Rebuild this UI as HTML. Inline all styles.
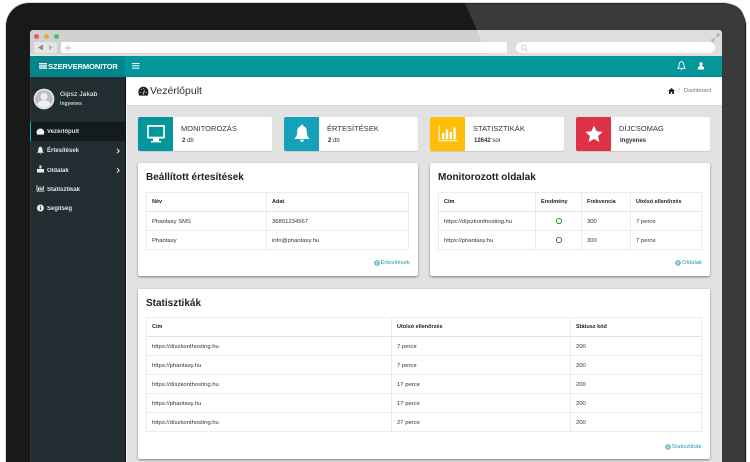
<!DOCTYPE html>
<html><head><meta charset="utf-8">
<style>
html,body{margin:0;padding:0;width:750px;height:462px;overflow:hidden;background:#fff}
*{box-sizing:border-box}
body{font-family:"Liberation Sans",sans-serif;position:relative;color:#333}
.a{position:absolute}
.t{position:absolute;white-space:nowrap;line-height:1}
.card{position:absolute;top:117px;height:34px;width:134px;background:#fff;border-radius:2px;box-shadow:0 1px 1px rgba(0,0,0,.12)}
.ic{position:absolute;left:0;top:0;width:35px;height:34px;border-radius:2px 0 0 2px}
.ct{position:absolute;left:43px;top:8px;font-size:7.4px;color:#333;white-space:nowrap;line-height:1;letter-spacing:.1px}
.cn{position:absolute;left:44px;top:20.5px;font-size:6px;color:#333;white-space:nowrap;line-height:1}
.panel{position:absolute;background:#fff;border-radius:2px;box-shadow:0 1px 2px rgba(0,0,0,.45)}
h3{position:absolute;margin:0;font-size:10px;font-weight:bold;color:#222;line-height:1;white-space:nowrap;left:8px;top:10px}
table{position:absolute;border-collapse:collapse;table-layout:fixed;font-size:5.9px;color:#333}
td,th{border:1px solid #ececec;padding:0 0 0 5px;text-align:left;height:19px;white-space:nowrap;overflow:hidden}
td{padding-top:1px}
th{color:#222;font-weight:bold;font-size:5.5px;border-bottom:1.5px solid #e2e2e2}
.l{position:absolute;font-size:5.9px;color:#2a9bad;white-space:nowrap;line-height:1}
.m{position:absolute;left:47px;font-size:6px;color:#eef;white-space:nowrap;line-height:1;font-weight:bold;opacity:.92}
.dot{display:inline-block;width:5.5px;height:5.5px;border:1.6px solid #2a9a2a;border-radius:50%;margin-left:15px;vertical-align:middle}
</style></head>
<body>
<!-- bezel -->
<div class="a" style="left:5px;top:2px;width:742px;height:480px;border-radius:24px 24px 0 0;background:#191919;border:1.5px solid #d8d8d8;border-bottom:0"></div>
<svg class="a" style="left:0;top:0" width="750" height="462"><path d="M465 3.5H724Q745 3.5 745 25V462H722V30H477Z" fill="#3a3a3a"/></svg>
<!-- screen -->
<div class="a" style="left:30px;top:30px;width:692px;height:432px;background:#e2e2e2;border-radius:3px 3px 0 0;overflow:hidden">
  <div class="a" style="left:0;top:0;width:692px;height:26px;background:#d1d1d1"></div>
  <svg class="a" style="left:0;top:0" width="692" height="26"><path d="M447 0H692V26H457Z" fill="#dedede"/></svg>
  <div class="a" style="left:0;top:24px;width:692px;height:2px;background:#e8dede"></div>
</div>
<div class="a" style="left:33.5px;top:33.5px;width:5.4px;height:5.4px;border-radius:50%;background:#ee5a5f"></div>
<div class="a" style="left:43.5px;top:33.5px;width:5.4px;height:5.4px;border-radius:50%;background:#e5b02e"></div>
<div class="a" style="left:53.5px;top:33.5px;width:5.4px;height:5.4px;border-radius:50%;background:#3ec76a"></div>
<div class="a" style="left:34px;top:42px;width:23px;height:11px;background:#e6e6e6;border-radius:2px"></div>
<svg class="a" style="left:37px;top:44px" width="18" height="7"><path d="M1 3.5L6 .5V6.5Z" fill="#8a8a8a"/><path d="M12 .8L16 3.5L12 6.2Z" fill="#b5b5b5"/></svg>
<div class="a" style="left:61px;top:42px;width:446px;height:11px;background:#fff;border-radius:2px"></div>
<svg class="a" style="left:64px;top:44px" width="8" height="8"><path d="M4 1V7M1 4H7" stroke="#bbb" stroke-width="1"/></svg>
<div class="a" style="left:516px;top:42px;width:199px;height:11px;background:#fff;border-radius:6px"></div>
<svg class="a" style="left:520px;top:44px" width="9" height="8"><circle cx="3.6" cy="3.4" r="2.3" fill="none" stroke="#c4c4c4" stroke-width=".8"/><path d="M5.4 5.2L7.5 7.3" stroke="#c4c4c4"/></svg>
<svg class="a" style="left:711px;top:33px" width="9" height="9"><path d="M1 8L4 5M5 4L8 1M5.5 1H8V3.5M1 5.5V8H3.5" stroke="#a9a9a9" fill="none"/></svg>
<!-- top nav -->
<div class="a" style="left:30px;top:56px;width:692px;height:21px;background:#05969c;border-bottom:1px solid #04838a"></div>
<div class="a" style="left:30px;top:56px;width:95px;height:21px;background:#03858c"></div>
<svg class="a" style="left:39px;top:63px" width="8" height="6"><path d="M0 0H8V1.4H0ZM0 2.2H8V3.6H0ZM0 4.4H8V5.8H0Z" fill="#fff"/></svg>
<div class="t" style="left:48px;top:62.5px;font-size:7.6px;font-weight:bold;color:#fff;letter-spacing:-.12px">SZERVERMONITOR</div>
<svg class="a" style="left:132px;top:63px" width="8" height="6"><path d="M0 0H7.5V1H0ZM0 2.3H7.5V3.3H0ZM0 4.6H7.5V5.6H0Z" fill="#fff"/></svg>
<svg class="a" style="left:677px;top:61px" width="9" height="10"><path d="M4.5 .6C2.6 .9 2.2 2.3 2.2 4C2.2 5.5 1.6 6.4 .8 7.3H8.2C7.4 6.4 6.8 5.5 6.8 4C6.8 2.3 6.4 .9 4.5 .6Z" fill="none" stroke="#fff" stroke-width=".9"/><path d="M3.5 8.2H5.5L4.5 9.4Z" fill="#fff"/></svg>
<svg class="a" style="left:697px;top:62px" width="8" height="8"><circle cx="4" cy="2" r="1.7" fill="#fff"/><path d="M.8 7.5C.8 5 2 3.8 4 3.8S7.2 5 7.2 7.5Z" fill="#fff"/></svg>
<!-- sidebar -->
<div class="a" style="left:30px;top:77px;width:95px;height:385px;background:#222d32;border-left:1px solid #2c3a40"></div>
<div class="a" style="left:125px;top:77px;width:1px;height:385px;background:#111"></div>
<div class="a" style="left:126px;top:77px;width:1px;height:385px;background:#f2f2f2"></div>
<svg class="a" style="left:33px;top:88px" width="22" height="22"><circle cx="11" cy="11" r="10.4" fill="#e2e2e2"/><circle cx="11" cy="11" r="8.6" fill="#bdbdbd"/><circle cx="11" cy="8.5" r="3.6" fill="#f0f0f0"/><path d="M4.2 16C5.5 13.4 8 12.5 11 12.5S16.5 13.4 17.8 16C16 18.4 13.6 19.5 11 19.5S6 18.4 4.2 16Z" fill="#f0f0f0"/></svg>
<div class="t" style="left:60px;top:91.5px;font-size:6.8px;color:#fff">Gipsz Jakab</div>
<div class="t" style="left:60px;top:101.5px;font-size:5.4px;color:#fff">Ingyenes</div>
<div class="a" style="left:30px;top:122px;width:95px;height:19px;background:#141b1e;border-left:1px solid #10b5c0"></div>
<div class="m" style="top:129px">Vezérlőpult</div>
<div class="m" style="top:148px">Értesítések</div>
<div class="m" style="top:168px">Oldalak</div>
<div class="m" style="top:187px">Statisztikák</div>
<div class="m" style="top:206px">Segítség</div>
<svg class="a" style="left:36px;top:127px" width="9" height="90">
 <path d="M1.2 7.6A3.9 3.9 0 1 1 7.6 7.6Z" fill="#eee"/>
 <path d="M4.4 19.6C2.6 20 2.4 21.5 2.3 23C2.2 24.5 1.7 25 .9 25.8H7.9C7.1 25 6.6 24.5 6.5 23C6.4 21.5 6.2 20 4.4 19.6ZM3.6 26.4H5.2L4.4 27.4Z" fill="#eee"/>
 <path d="M3.4 38.5H5.4V41.5H3.4ZM1 42H3.6V45.5H1ZM3.4 42H5.6V45.5H3.4ZM5.4 42H8V45.5H5.4Z" fill="#eee"/>
 <path d="M.6 58V64.5H8.4V63.7H1.4V58ZM2 60.5H3V63.2H2ZM3.6 59.5H4.6V63.2H3.6ZM5.2 60.8H6.2V63.2H5.2ZM6.8 59H7.8V63.2H6.8Z" fill="#eee"/>
 <circle cx="4.4" cy="81" r="3.5" fill="#eee"/><path d="M3.9 80.2H4.9V83H3.9ZM3.9 78.8H4.9V79.6H3.9Z" fill="#222d32"/>
</svg>
<svg class="a" style="left:116px;top:148px" width="5" height="28"><path d="M1 .8L3.2 3L1 5.2M1 20.2L3.2 22.4L1 24.6" fill="none" stroke="#eee" stroke-width="1"/></svg>
<!-- content header -->
<div class="a" style="left:127px;top:77px;width:595px;height:29px;background:#fff;border-bottom:1px solid #d6d6d6"></div>
<svg class="a" style="left:138px;top:86px" width="11" height="10"><path d="M1.2 9.6Q.2 8 .4 5.6A5 5 0 0 1 10.4 5.6Q10.6 8 9.6 9.6Z" fill="#222"/><path d="M5.4 8.4L6.4 4.2M2.2 6.4H3.2M3.2 3.4L3.8 4M7.8 6.4H8.8M5.4 2V2.8" stroke="#fff" stroke-width=".8"/></svg>
<div class="t" style="left:150px;top:86px;font-size:10.5px;color:#333">Vezérlőpult</div>
<svg class="a" style="left:668px;top:88px" width="7" height="6"><path d="M3.5 0L7 3H6V6H4.2V4H2.8V6H1V3H0Z" fill="#222"/></svg>
<div class="t" style="left:678px;top:88.5px;font-size:5.5px;color:#888">/</div>
<div class="t" style="left:684px;top:88.5px;font-size:5.6px;color:#777">Dashboard</div>
<!-- info boxes -->
<div class="card" style="left:138px"><div class="ic" style="background:#05969c"></div>
 <svg class="a" style="left:8px;top:7px" width="20" height="20"><rect x="1" y="1" width="18" height="13.5" rx="1.2" fill="#fff"/><rect x="2.8" y="2.8" width="14.4" height="9.9" fill="#05969c"/><path d="M7 14.5H13V17H15V18.4H5V17H7Z" fill="#fff"/></svg>
 <div class="ct">MONITOROZÁS</div><div class="cn"><b>2</b> db</div></div>
<div class="card" style="left:284px"><div class="ic" style="background:#16a1bb"></div>
 <svg class="a" style="left:9px;top:7px" width="18" height="20"><path d="M9 .8C8 .8 7.6 1.4 7.5 2.2C5 3 4.2 5 4.2 7.5C4.2 11 3.4 12.8 1.2 15H16.8C14.6 12.8 13.8 11 13.8 7.5C13.8 5 13 3 10.5 2.2C10.4 1.4 10 .8 9 .8ZM7 15.8C7.2 17 8 17.9 9 17.9S10.8 17 11 15.8Z" fill="#fff"/></svg>
 <div class="ct">ÉRTESÍTÉSEK</div><div class="cn"><b>2</b> db</div></div>
<div class="card" style="left:430px"><div class="ic" style="background:#fdbe08"></div>
 <svg class="a" style="left:8px;top:7px" width="20" height="20"><path d="M.6 1.5H1.6V16.3H19.4V17.3H.6Z" fill="#fff"/><path d="M4 9H6.4V15.3H4ZM7.8 5.5H10.2V15.3H7.8ZM11.6 8H14V15.3H11.6ZM15.4 3.5H17.8V15.3H15.4Z" fill="#fff"/></svg>
 <div class="ct">STATISZTIKÁK</div><div class="cn"><b>12642</b> sor</div></div>
<div class="card" style="left:576px"><div class="ic" style="background:#de3148"></div>
 <svg class="a" style="left:8px;top:7px" width="20" height="20"><path d="M10 1.6L12.6 7.2L18.6 7.9L14.1 12L15.4 18L10 15L4.6 18L5.9 12L1.4 7.9L7.4 7.2Z" fill="#fff"/></svg>
 <div class="ct">DÍJCSOMAG</div><div class="cn"><b>Ingyenes</b></div></div>
<!-- panel 1 -->
<div class="panel" style="left:138px;top:163px;width:280px;height:113px"><h3>Beállított értesítések</h3>
 <table style="left:8px;top:29px;width:263px"><colgroup><col style="width:120px"><col></colgroup>
  <tr><th>Név</th><th>Adat</th></tr>
  <tr><td>Phantasy SMS</td><td>36801234567</td></tr>
  <tr><td>Phantasy</td><td>info@phantasy.hu</td></tr></table>
 <svg class="a" style="left:236px;top:97px" width="6" height="6"><circle cx="3" cy="3" r="2.2" fill="none" stroke="#2a9bad" stroke-width="1"/><path d="M1.5 3H4.5" stroke="#2a9bad" stroke-width=".8"/></svg>
 <div class="l" style="left:242.5px;top:97.5px">Értesítések</div></div>
<!-- panel 2 -->
<div class="panel" style="left:430px;top:163px;width:280px;height:113px"><h3>Monitorozott oldalak</h3>
 <table style="left:8px;top:29px;width:264px"><colgroup><col style="width:97px"><col style="width:46px"><col style="width:49px"><col></colgroup>
  <tr><th>Cím</th><th>Eredmény</th><th>Frekvencia</th><th>Utolsó ellenőrzés</th></tr>
  <tr><td>https://díjszkonthosting.hu</td><td><span class="dot"></span></td><td>300</td><td>7 perce</td></tr>
  <tr><td>https://phantasy.hu</td><td><span class="dot"></span></td><td>300</td><td>7 perce</td></tr></table>
 <svg class="a" style="left:245px;top:97px" width="6" height="6"><circle cx="3" cy="3" r="2.2" fill="none" stroke="#2a9bad" stroke-width="1"/><path d="M1.5 3H4.5" stroke="#2a9bad" stroke-width=".8"/></svg>
 <div class="l" style="left:252px;top:97.5px">Oldalak</div></div>
<!-- panel 3 -->
<div class="panel" style="left:138px;top:289px;width:572px;height:170px"><h3>Statisztikák</h3>
 <table style="left:8px;top:28px;width:556px"><colgroup><col style="width:245px"><col style="width:179px"><col></colgroup>
  <tr><th>Cím</th><th>Utolsó ellenőrzés</th><th>Státusz kód</th></tr>
  <tr><td>https://díszkonthosting.hu</td><td>7 perce</td><td>200</td></tr>
  <tr><td>https://phantasy.hu</td><td>7 perce</td><td>200</td></tr>
  <tr><td>https://díszkonthosting.hu</td><td>17 perce</td><td>200</td></tr>
  <tr><td>https://phantasy.hu</td><td>17 perce</td><td>200</td></tr>
  <tr><td>https://díszkonthosting.hu</td><td>27 perce</td><td>200</td></tr></table>
 <svg class="a" style="left:527px;top:155px" width="6" height="6"><circle cx="3" cy="3" r="2.2" fill="none" stroke="#2a9bad" stroke-width="1"/><path d="M1.5 3H4.5" stroke="#2a9bad" stroke-width=".8"/></svg>
 <div class="l" style="left:533.5px;top:155.5px">Statisztikák</div></div>
</body></html>
